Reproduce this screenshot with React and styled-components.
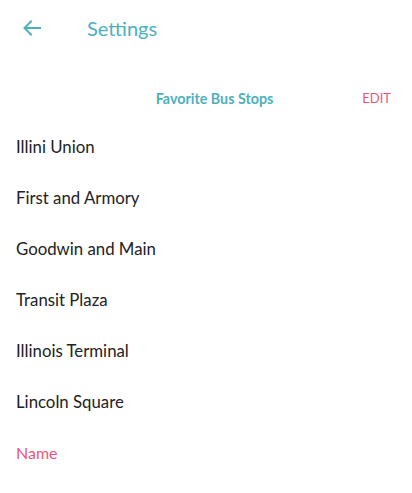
import styled, { createGlobalStyle } from "styled-components"

const GlobalStyle = createGlobalStyle`
    body{
        margin: 0;
        background: #ffffff;
        font-family: "Lato", "Open Sans", sans-serif;
    }
`

const stops = [
    "Illini Union",
    "First and Armory",
    "Goodwin and Main",
    "Transit Plaza",
    "Illinois Terminal",
    "Lincoln Square",
]

export default function App(){
    return(
        <>
            <GlobalStyle />
            <Page>
                <Header>
                    <BackButton aria-label="back">
                        <svg width="18" height="16" viewBox="0 0 18 16" fill="none">
                            <path d="M17 8H2M8 1.5L1.5 8L8 14.5" stroke="#4cb0bd" strokeWidth="2" strokeLinecap="square"/>
                        </svg>
                    </BackButton>
                    <Title>Settings</Title>
                </Header>
                <SectionRow>
                    <SectionTitle>Favorite Bus Stops</SectionTitle>
                    <EditLink>EDIT</EditLink>
                </SectionRow>
                <StopList>
                    {stops.map(stop => (
                        <StopItem key={stop}>{stop}</StopItem>
                    ))}
                    <StopItem accent>Name</StopItem>
                </StopList>
            </Page>
        </>
    )
}

const Page = styled.div`
    width: 412px;
    height: 493px;
    background: #ffffff;
`
const Header = styled.header`
    height: 56px;
    display: flex;
    align-items: center;
    padding-left: 23px;
`
const BackButton = styled.div`
    width: 18px;
    height: 16px;
    display: flex;
    margin-right: 46px;
`
const Title = styled.h1`
    margin: 0;
    font-size: 20px;
    font-weight: 400;
    color: #4cb0bd;
`
const SectionRow = styled.div`
    display: grid;
    grid-template-columns: 1fr auto 1fr;
    align-items: center;
    height: 30px;
    margin-top: 27px;
    padding: 0 21px 0 38px;
`
const SectionTitle = styled.h2`
    grid-column: 2;
    margin: 0;
    font-size: 14.3px;
    font-weight: 700;
    color: #4cb0bd;
`
const EditLink = styled.span`
    justify-self: end;
    font-size: 13px;
    color: #e8587a;
`
const StopList = styled.ul`
    list-style: none;
    margin: 8px 0 0;
    padding: 0 16px;
`
const StopItem = styled.li`
    height: 51px;
    display: flex;
    align-items: center;
    font-size: ${props => props.accent ? "16px" : "16.8px"};
    color: ${props => props.accent ? "#e8587a" : "#222222"};
`
